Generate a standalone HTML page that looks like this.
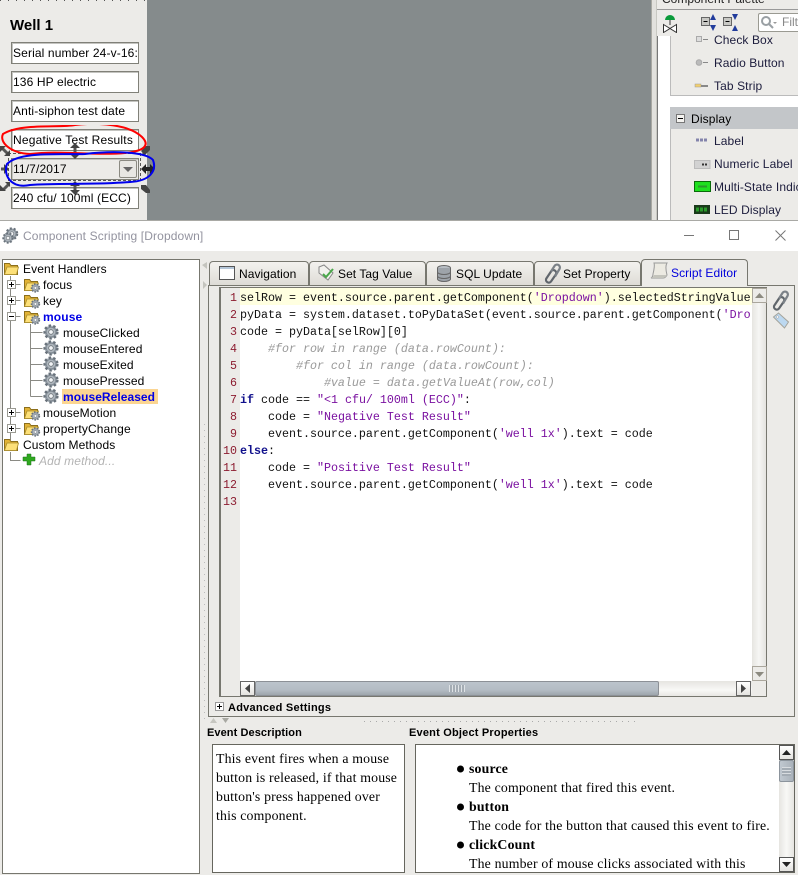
<!DOCTYPE html>
<html><head><meta charset="utf-8">
<style>
html,body{margin:0;padding:0;width:798px;height:875px;overflow:hidden;background:#ecebe8}
body{position:relative;font-family:"Liberation Sans",sans-serif;font-size:12px;color:#000}
.a{position:absolute;box-sizing:border-box}
.t{position:absolute;white-space:pre;line-height:16px}
.fld{position:absolute;left:11px;width:128px;height:22px;background:#fff;border:1px solid #808078;box-shadow:inset 1px 1px 0 #c4c4c0;font-size:12px;line-height:20px;padding-left:1px;white-space:pre;overflow:hidden;letter-spacing:.13px;box-sizing:border-box}
.pal{position:absolute;left:714px;font-size:12px;line-height:16px;color:#1c1c3c;white-space:pre;letter-spacing:.1px}
.tree{position:absolute;font-size:12px;line-height:16px;white-space:pre;letter-spacing:.12px}
.tab{position:absolute;top:261px;height:24px;background:linear-gradient(#f3f2ef,#dedcd6);border:1px solid #77776f;border-bottom:none;border-radius:4px 4px 0 0;box-sizing:border-box;font-size:12px;line-height:24px;white-space:pre;letter-spacing:.06px}
.c{position:absolute;left:240px;font-family:"Liberation Mono",monospace;font-size:11.67px;line-height:17px;white-space:pre;color:#111}
.n{position:absolute;width:17px;text-align:right;left:220px;font-family:"Liberation Mono",monospace;font-size:11.67px;line-height:17px;color:#8c1c30}
.s{color:#7a10a0}.k{color:#10108c;font-weight:bold}.g{color:#999;font-style:italic}
.ser{position:absolute;font-family:"Liberation Serif",serif;font-size:13.8px;letter-spacing:.17px;line-height:19px;white-space:pre}
.btn{position:absolute;background:linear-gradient(#fff,#e4e3df);border:1px solid #8b8a82;box-sizing:border-box}
.plus,.minus{position:absolute;left:7px;width:9px;height:9px;border:1px solid #9a9a92;background:#fff;box-sizing:border-box}
.plus:before,.minus:before{content:"";position:absolute;left:1px;top:3px;width:5px;height:1px;background:#000}
.plus:after{content:"";position:absolute;left:3px;top:1px;width:1px;height:5px;background:#000}
</style></head><body>

<svg width="0" height="0" style="position:absolute">
<defs>
<g id="gear"><circle cx="8" cy="8" r="6.4" fill="#a4adb5" stroke="#68717a" stroke-width="2.4" stroke-dasharray="2.4 2.2"/><circle cx="8" cy="8" r="4.8" fill="#aeb6bd" stroke="#7c858e" stroke-width=".8"/><circle cx="8" cy="8" r="2.3" fill="#f2f4f6" stroke="#6d747a" stroke-width=".8"/></g>
<g id="folder"><path d="M1.500 3.500h5l1.500 2h6.500v9H1.500z" fill="#e2b336" stroke="#8c6f1c"/><path d="M4 7h11.500l-2 7.500H1.500z" fill="#fde078" stroke="#a88c2c" stroke-width=".8"/></g>
<g id="gfolder"><use href="#folder"/><g transform="translate(7.500,7) scale(.62)"><use href="#gear"/></g></g>
<g id="clip"><path d="M3 16L8 8.500a2.800 2.800 0 0 1 4.800 3L8 18.500a2.800 2.800 0 0 1-4.800-2.800z" fill="none" stroke="#60666c" stroke-width="2.200"/><path d="M8 8.500L11.500 3a2.900 2.900 0 0 1 5 3L12 13.500" fill="none" stroke="#7c8288" stroke-width="2.200"/></g>
</defs>
</svg>

<!-- top canvas -->
<div class="a" style="left:0;top:0;width:147px;height:220px;background:#ecebe8"></div>
<div class="a" style="left:147px;top:0;width:504px;height:220px;background:#858b8c"></div>
<div class="a" style="left:0;top:0;width:147px;height:1px;background:repeating-linear-gradient(90deg,#555 0 1px,#ecebe8 1px 8px)"></div>
<div class="t" style="left:10px;top:17px;font-size:15px;font-weight:bold;line-height:18px">Well 1</div>
<div class="fld" style="top:42px">Serial number 24-v-16:</div>
<div class="fld" style="top:71px">136 HP electric</div>
<div class="fld" style="top:100px">Anti-siphon test date</div>
<div class="fld" style="top:129px;letter-spacing:.2px">Negative Test Results</div>
<div class="fld" style="top:158px;background:#ecebe8">11/7/2017</div>
<div class="btn" style="left:119px;top:160px;width:18px;height:18px;background:#e8e7e3;border-radius:2px"></div>
<svg class="a" style="left:123px;top:167px" width="10" height="5"><path d="M0 0h10L5 5z" fill="#666"/></svg>
<div class="fld" style="top:187px">240 cfu/ 100ml (ECC)</div>
<div class="a" style="left:8px;top:153px;width:133px;height:28px;border:1px dashed #555"></div>

<!-- handles -->
<svg class="a" style="left:0;top:125px" width="160" height="96" viewBox="0 125 160 96">
<g fill="none" stroke="#555" stroke-width="3">
<path d="M2 148l6 6M3 190l6-6M143 154l5-5M143 186l5 5"/>
<path d="M75 146v10M75 184v8"/><path d="M1 169h6"/>
</g>
<g fill="#444">
<path d="M0 146h6l-6 6zM10 156h-6l6-6zM0 191h6l-6-6zM10 182v5l-5-5zM141 151l5-5h4v4l-5 5zM141 185h5l4 5v3h-4l-5-4z"/>
<path d="M75 143l5 5H70zM75 159l5-5H70zM75 181l5 5H70zM75 195l5-5H70zM9 169l-5-5v10z"/>
</g>
<path d="M141 169l5-5v3h4v-3l5 5-5 5v-3h-4v3z" fill="#222"/>
<path d="M3 134 C20 123 60 128 75 125 C100 122 130 125 142 137 C150 145 145 151 125 153 C95 156 60 150 30 154 C10 153 -1 142 3 134Z" fill="none" stroke="#f00" stroke-width="2"/>
<path d="M7 164 C20 151 60 155 85 154 C110 151 145 151 153 160 C157 171 150 181 130 182 C95 185 60 183 30 185 C10 189 3 174 7 164Z" fill="none" stroke="#0000ee" stroke-width="2"/>
</svg>

<!-- palette -->
<div class="a" style="left:651px;top:0;width:147px;height:220px;background:#ecebe8"></div>
<div class="a" style="left:651px;top:0;width:6px;height:220px;background:#e2e1dd;border-left:1px solid #a8a8a2;border-right:1px solid #c8c8c2"></div>
<div class="t" style="left:662px;top:-9px;color:#222">Component Palette</div>
<div class="a" style="left:657px;top:9px;width:141px;height:1px;background:#999"></div>
<svg class="a" style="left:662px;top:13px" width="96" height="20">
<path d="M3 7a5 5 0 0 1 10 0z" fill="#0a9a3a"/><path d="M8 7v5" stroke="#333"/><path d="M1.500 11.500l6.500 4-6.500 4zM14.500 11.500l-6.500 4 6.500 4z" fill="#fff" stroke="#333"/>
<rect x="39.500" y="4.500" width="8" height="8" fill="#c8c8c4" stroke="#666"/><path d="M41.500 8.500h4" stroke="#000"/><path d="M51 1l3 6h-6zM51 18l3-6h-6z" fill="#223c9c"/>
<rect x="61.500" y="4.500" width="8" height="8" fill="#c8c8c4" stroke="#666"/><path d="M63.500 8.500h4" stroke="#000"/><path d="M73 7l3-6h-6zM73 12l3 6h-6z" fill="#223c9c"/>
</svg>
<div class="a" style="left:758px;top:13px;width:40px;height:19px;background:#fff;border:1px solid #9a9a92;border-right:none;border-radius:2px 0 0 2px"></div>
<svg class="a" style="left:760px;top:15px" width="18" height="15"><circle cx="6" cy="6" r="4" fill="none" stroke="#9aa0a4" stroke-width="2"/><path d="M9 9l4 4" stroke="#9aa0a4" stroke-width="2"/><path d="M13 7h4l-2 2z" fill="#999"/></svg>
<div class="t" style="left:782px;top:14px;color:#888">Filt</div>
<div class="a" style="left:657px;top:36px;width:141px;height:184px;background:#fff;border-left:1px solid #777"></div>
<div class="a" style="left:670px;top:36px;width:128px;height:60px;background:#ecebe8;border-left:1px solid #bbb;border-bottom:1px solid #bbb"></div>
<div class="a" style="left:670px;top:107px;width:128px;height:22px;background:#c3c6c9"></div>
<div class="a" style="left:670px;top:129px;width:128px;height:91px;background:#ecebe8;border-left:1px solid #bbb"></div>
<div class="a" style="left:676px;top:114px;width:9px;height:9px;background:#f4f3f0;border:1px solid #777"><div class="a" style="left:1px;top:3px;width:5px;height:1px;background:#000"></div></div>
<div class="t" style="left:691px;top:111px;letter-spacing:.15px">Display</div>
<div class="pal" style="top:32px">Check Box</div>
<div class="pal" style="top:55px">Radio Button</div>
<div class="pal" style="top:78px">Tab Strip</div>
<div class="pal" style="top:133px">Label</div>
<div class="pal" style="top:156px">Numeric Label</div>
<div class="pal" style="top:179px">Multi-State Indic</div>
<div class="pal" style="top:202px">LED Display</div>
<svg class="a" style="left:694px;top:33px" width="18" height="185">
<rect x="2.500" y="3.500" width="5" height="5" fill="#ddd" stroke="#aaa"/><path d="M9 6.500h5" stroke="#888"/>
<circle cx="5" cy="29.500" r="2.800" fill="#bbb" stroke="#aaa"/><path d="M9 29.500h5" stroke="#888"/>
<rect x="1" y="51" width="6" height="3" fill="#f2cf6e" stroke="#999" stroke-width=".5"/><path d="M7 53h7" stroke="#888" stroke-width="2"/>
<path d="M2 107h12" stroke="#8484ac" stroke-width="3" stroke-dasharray="3 1"/>
<rect x=".5" y="127.500" width="15.500" height="8" fill="#d2d2d2" stroke="#bbb"/><path d="M8 131.500h6" stroke="#333" stroke-width="2" stroke-dasharray="2 1"/>
<rect x=".5" y="148.500" width="16" height="10" fill="#1fe01f" stroke="#0a6a0a"/><path d="M4 153.500h9" stroke="#2a9a2a" stroke-width="2"/>
<rect x="0" y="172" width="16" height="9" fill="#1a3a1a"/><path d="M2 176.500h12" stroke="#2a9a2a" stroke-width="4" stroke-dasharray="3 1"/>
</svg>

<!-- title bar -->
<div class="a" style="left:0;top:220px;width:798px;height:1px;background:#a9a9a5"></div>
<div class="a" style="left:0;top:221px;width:798px;height:30px;background:#fff"></div>
<svg class="a" style="left:2px;top:227px" width="17" height="17"><use href="#gear" transform="translate(3,0) scale(.85)"/><use href="#gear" transform="translate(0,5) scale(.75)"/></svg>
<div class="t" style="left:23px;top:228px;font-size:12px;color:#93939f;letter-spacing:.12px">Component Scripting [Dropdown]</div>
<div class="a" style="left:684px;top:235px;width:10px;height:1px;background:#777"></div>
<div class="a" style="left:729px;top:230px;width:10px;height:10px;border:1px solid #777"></div>
<svg class="a" style="left:775px;top:230px" width="11" height="11"><path d="M.5 .5l10 10M10.500 .5l-10 10" stroke="#777"/></svg>

<!-- tree -->
<div class="a" style="left:2px;top:259px;width:198px;height:615px;background:#fff;border:1px solid #77776f"></div>
<svg class="a" style="left:3px;top:260px" width="196" height="215" viewBox="3 260 196 215">
<path d="M10.500 276V440M10.500 284.500h10M10.500 300.500h10M10.500 316.500h10M10.500 412.500h10M10.500 428.500h10M30.500 324v72.500M30.500 332.500h12M30.500 348.500h12M30.500 364.500h12M30.500 380.500h12M30.500 396.500h12M10.500 452v8.500h10" fill="none" stroke="#8a8a84"/>
<use href="#folder" x="3" y="260"/>
<use href="#gfolder" x="23" y="276"/><use href="#gfolder" x="23" y="292"/><use href="#gfolder" x="23" y="308"/>
<use href="#gear" x="43" y="324"/><use href="#gear" x="43" y="340"/><use href="#gear" x="43" y="356"/><use href="#gear" x="43" y="372"/><use href="#gear" x="43" y="388"/>
<use href="#gfolder" x="23" y="404"/><use href="#gfolder" x="23" y="420"/>
<use href="#folder" x="3" y="436"/>
<path d="M23 457h4v-3h4v3h4v4h-4v4h-4v-4h-4z" fill="#2fa81f" stroke="#1a701a" stroke-width=".5"/>
</svg>
<div class="plus" style="top:280px"></div><div class="plus" style="top:296px"></div><div class="minus" style="top:312px"></div><div class="plus" style="top:408px"></div><div class="plus" style="top:424px"></div>
<div class="tree" style="left:23px;top:261px">Event Handlers</div>
<div class="tree" style="left:43px;top:277px">focus</div>
<div class="tree" style="left:43px;top:293px">key</div>
<div class="tree" style="left:43px;top:309px;color:#0000e6;font-weight:bold">mouse</div>
<div class="tree" style="left:63px;top:325px">mouseClicked</div>
<div class="tree" style="left:63px;top:341px">mouseEntered</div>
<div class="tree" style="left:63px;top:357px">mouseExited</div>
<div class="tree" style="left:63px;top:373px">mousePressed</div>
<div class="a" style="left:62px;top:389px;width:96px;height:15px;background:#fbd592"></div>
<div class="tree" style="left:63px;top:389px;color:#0000e6;font-weight:bold;letter-spacing:.05px">mouseReleased</div>
<div class="tree" style="left:43px;top:405px">mouseMotion</div>
<div class="tree" style="left:43px;top:421px">propertyChange</div>
<div class="tree" style="left:23px;top:437px">Custom Methods</div>
<div class="tree" style="left:39px;top:453px;color:#b4b4b4;font-style:italic">Add method...</div>

<!-- splitter -->
<svg class="a" style="left:202px;top:259px" width="6" height="460"><path d="M0 3l5-3v7zM1 19l4 4-4 4z" fill="#c4c4be" transform="translate(0,3)"/><path d="M2.500 165V460" stroke="#bbb" stroke-dasharray="1 5"/></svg>

<!-- tabs -->
<div class="a" style="left:208px;top:285px;width:587px;height:432px;background:#ecebe8;border:1px solid #77776f"></div>
<div class="tab" style="left:209px;width:100px;padding-left:29px">Navigation</div>
<div class="tab" style="left:309px;width:117px;padding-left:28px">Set Tag Value</div>
<div class="tab" style="left:426px;width:108px;padding-left:29px">SQL Update</div>
<div class="tab" style="left:534px;width:107px;padding-left:28px">Set Property</div>
<div class="tab" style="left:641px;top:259px;width:107px;height:27px;padding-left:29px;background:#ecebe8;color:#0000dc;line-height:26px">Script Editor</div>
<svg class="a" style="left:214px;top:263px" width="420" height="22">
<rect x="5.500" y="3.500" width="15" height="13" fill="#fff" stroke="#555"/><path d="M6 4h14v2H6z" fill="#b4c6d8"/>
<path d="M105 4l5-2 9 8-5 7-9-7z" fill="#f2f2ee" stroke="#888"/><path d="M109 11l3 3 7-8" fill="none" stroke="#4aa84a" stroke-width="2"/>
<ellipse cx="230" cy="5" rx="6.500" ry="2.500" fill="#b8bec4" stroke="#666"/><path d="M223.500 5v11a6.500 2.500 0 0 0 13 0V5" fill="#9ea4aa" stroke="#666"/><path d="M223.500 9a6.500 2.500 0 0 0 13 0M223.500 13a6.500 2.500 0 0 0 13 0" fill="none" stroke="#666"/>
<g transform="translate(329,0)"><use href="#clip"/></g>
</svg>
<svg class="a" style="left:649px;top:261px" width="20" height="22"><path d="M5 2h13c-2 3-1 8 0 12-1 2-2 3-4 3H2c2-1 2-3 2-4C5 9 6 5 5 2z" fill="#eceae2" stroke="#999"/><path d="M2 17h12c1 0 3-1 4-3H5c0 1-1 2-3 3z" fill="#c4c4bc"/></svg>

<!-- editor -->
<div class="a" style="left:219px;top:287px;width:548px;height:410px;background:#fff;border:1px solid #77776f;border-width:1px 1px 1px 2px"></div>
<div class="a" style="left:221px;top:288px;width:19px;height:408px;background:#ecebe8"></div>
<div class="a" style="left:240px;top:288px;width:512px;height:17px;background:#ffffe0"></div>
<div class="n" style="top:290px">1</div><div class="n" style="top:307px">2</div><div class="n" style="top:324px">3</div><div class="n" style="top:341px">4</div><div class="n" style="top:358px">5</div><div class="n" style="top:375px">6</div><div class="n" style="top:392px">7</div><div class="n" style="top:409px">8</div><div class="n" style="top:426px">9</div><div class="n" style="top:443px">10</div><div class="n" style="top:460px">11</div><div class="n" style="top:477px">12</div><div class="n" style="top:494px">13</div>
<div style="position:absolute;left:240px;top:290px;width:512px;height:230px;overflow:hidden">
<div class="c" style="left:0;top:0">selRow = event.source.parent.getComponent(<span class="s">'Dropdown'</span>).selectedStringValue</div>
<div class="c" style="left:0;top:17px">pyData = system.dataset.toPyDataSet(event.source.parent.getComponent(<span class="s">'Dro</span></div>
<div class="c" style="left:0;top:34px">code = pyData[selRow][0]</div>
<div class="c g" style="left:0;top:51px">    #for row in range (data.rowCount):</div>
<div class="c g" style="left:0;top:68px">        #for col in range (data.rowCount):</div>
<div class="c g" style="left:0;top:85px">            #value = data.getValueAt(row,col)</div>
<div class="c" style="left:0;top:102px"><span class="k">if</span> code == <span class="s">"&lt;1 cfu/ 100ml (ECC)"</span>:</div>
<div class="c" style="left:0;top:119px">    code = <span class="s">"Negative Test Result"</span></div>
<div class="c" style="left:0;top:136px">    event.source.parent.getComponent(<span class="s">'well 1x'</span>).text = code</div>
<div class="c" style="left:0;top:153px"><span class="k">else</span>:</div>
<div class="c" style="left:0;top:170px">    code = <span class="s">"Positive Test Result"</span></div>
<div class="c" style="left:0;top:187px">    event.source.parent.getComponent(<span class="s">'well 1x'</span>).text = code</div>
</div>
<!-- v scrollbar -->
<div class="a" style="left:752px;top:288px;width:14px;height:393px;background:linear-gradient(90deg,#e6e5e1,#f6f6f4 50%,#e4e3df)"></div>
<div class="btn" style="left:752px;top:288px;width:15px;height:15px;background:#ecebe8;border-color:#aaa69c"></div>
<svg class="a" style="left:755px;top:293px" width="9" height="5"><path d="M0 5h9L4.500 0z" fill="#8c8a80"/></svg>
<div class="btn" style="left:752px;top:666px;width:15px;height:15px;background:#ecebe8;border-color:#aaa69c"></div>
<svg class="a" style="left:755px;top:672px" width="9" height="5"><path d="M0 0h9L4.500 5z" fill="#8c8a80"/></svg>
<!-- h scrollbar -->
<div class="a" style="left:240px;top:681px;width:512px;height:15px;background:linear-gradient(#e6e5e1,#f8f8f6 60%,#e8e7e3)"></div>
<div class="a" style="left:752px;top:681px;width:14px;height:15px;background:#ecebe8"></div>
<div class="a" style="left:255px;top:681px;width:404px;height:15px;background:linear-gradient(#bcc4cc,#b4bcc4 60%,#9ea6ac);border:1px solid #8c9096;border-radius:2px"></div>
<div class="a" style="left:449px;top:685px;width:16px;height:7px;background:repeating-linear-gradient(90deg,#dfe3e6 0 1px,#a4acb4 1px 3px)"></div>
<div class="btn" style="left:240px;top:681px;width:15px;height:15px;border-color:#666"></div>
<svg class="a" style="left:245px;top:684px" width="5" height="9"><path d="M5 0v9L0 4.500z" fill="#444"/></svg>
<div class="btn" style="left:736px;top:681px;width:15px;height:15px;border-color:#666"></div>
<svg class="a" style="left:741px;top:684px" width="5" height="9"><path d="M0 0v9l5-4.500z" fill="#444"/></svg>
<!-- side icons -->
<svg class="a" style="left:771px;top:290px" width="20" height="22"><use href="#clip"/></svg>
<svg class="a" style="left:772px;top:312px" width="18" height="17"><path d="M1.500 5l5-4 10 9-4 6z" fill="#bcd8f0" stroke="#a4a49c"/><circle cx="5.500" cy="5" r="1.200" fill="#fff" stroke="#999" stroke-width=".5"/></svg>

<!-- advanced -->
<div class="a" style="left:215px;top:702px;width:9px;height:9px;background:#fff;border:1px solid #999"><div class="a" style="left:1px;top:3px;width:5px;height:1px;background:#000"></div><div class="a" style="left:3px;top:1px;width:1px;height:5px;background:#000"></div></div>
<div class="t" style="left:228px;top:700px;font-size:11px;font-weight:bold;letter-spacing:.25px">Advanced Settings</div>
<svg class="a" style="left:209px;top:718px" width="22" height="5"><path d="M1 5h7L4.500 0z" fill="#c6c6c0"/><path d="M13 0h7l-3.500 5z" fill="#a8a8a2"/></svg>
<div class="a" style="left:364px;top:721px;width:276px;height:1px;background:repeating-linear-gradient(90deg,#aaa 0 1px,transparent 1px 6px)"></div>

<div class="t" style="left:207px;top:725px;font-size:11px;font-weight:bold;letter-spacing:.08px">Event Description</div>
<div class="t" style="left:409px;top:725px;font-size:11px;font-weight:bold;letter-spacing:.2px">Event Object Properties</div>

<div class="a" style="left:212px;top:744px;width:193px;height:129px;background:#fff;border:1px solid #66665e"></div>
<div class="ser" style="left:216px;top:749px">This event fires when a mouse
button is released, if that mouse
button's press happened over
this component.</div>

<div class="a" style="left:415px;top:744px;width:380px;height:129px;background:#fff;border:1px solid #66665e"></div>
<svg class="a" style="left:456px;top:760px" width="10" height="100"><circle cx="4.500" cy="9" r="3.500"/><circle cx="4.500" cy="47" r="3.500"/><circle cx="4.500" cy="85" r="3.500"/></svg>
<div class="ser" style="left:469px;top:759px;font-weight:bold">source</div>
<div class="ser" style="left:469px;top:778px">The component that fired this event.</div>
<div class="ser" style="left:469px;top:797px;font-weight:bold">button</div>
<div class="ser" style="left:469px;top:816px">The code for the button that caused this event to fire.</div>
<div class="ser" style="left:469px;top:835px;font-weight:bold">clickCount</div>
<div class="ser" style="left:469px;top:854px">The number of mouse clicks associated with this</div>
<div class="a" style="left:779px;top:745px;width:15px;height:127px;background:linear-gradient(90deg,#e6e5e1,#f8f8f6 50%,#e6e5e1)"></div>
<div class="btn" style="left:779px;top:745px;width:15px;height:15px;border-color:#555"></div>
<svg class="a" style="left:782px;top:750px" width="9" height="5"><path d="M0 5h9L4.500 0z" fill="#222"/></svg>
<div class="a" style="left:779px;top:760px;width:15px;height:22px;background:linear-gradient(90deg,#c0c8d0,#aab2ba);border:1px solid #8c949c;border-radius:2px"></div>
<div class="a" style="left:782px;top:767px;width:9px;height:9px;background:repeating-linear-gradient(#d8dce0 0 1px,#a4acb4 1px 3px)"></div>
<div class="btn" style="left:779px;top:857px;width:15px;height:15px;border-color:#555"></div>
<svg class="a" style="left:782px;top:862px" width="9" height="5"><path d="M0 0h9L4.500 5z" fill="#222"/></svg>
</body></html>
